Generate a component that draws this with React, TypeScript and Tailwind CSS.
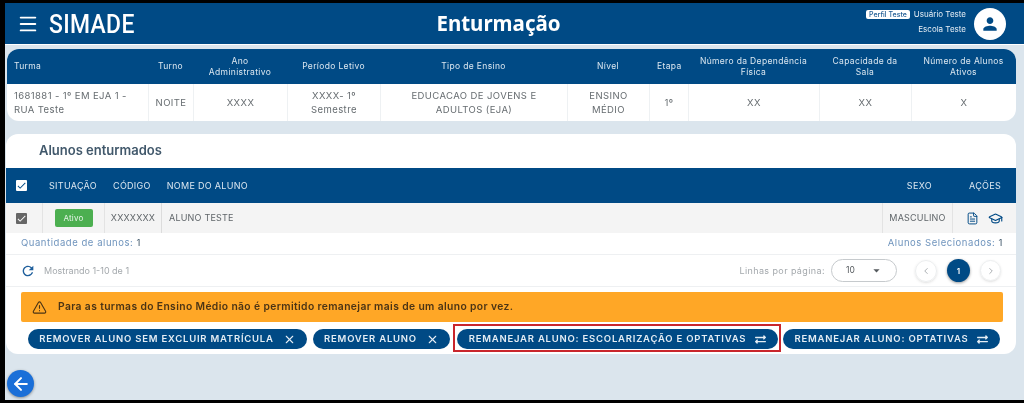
import { AlertTriangle, ArrowLeft, ChevronLeft, ChevronRight, FileText, GraduationCap, Menu, X } from "lucide-react";
import { FaExchangeAlt } from "react-icons/fa";
import { MdCheck, MdPerson, MdRefresh, MdArrowDropDown } from "react-icons/md";

const turmaCols = "grid-cols-[141px_45px_94px_93px_187px_82px_39px_131px_92px_105px]";

const headers = [
  "Turma",
  "Turno",
  "Ano Administrativo",
  "Período Letivo",
  "Tipo de Ensino",
  "Nível",
  "Etapa",
  "Número da Dependência Física",
  "Capacidade da Sala",
  "Número de Alunos Ativos",
];

const values = [
  "1681881 - 1º EM EJA 1 - RUA Teste",
  "NOITE",
  "XXXX",
  "XXXX- 1º Semestre",
  "EDUCACAO DE JOVENS E ADULTOS (EJA)",
  "ENSINO MÉDIO",
  "1º",
  "XX",
  "XX",
  "X",
];

const Check = ({ className }: { className: string }) => (
  <span className={`flex size-[11px] items-center justify-center rounded-[1px] ${className}`}>
    <MdCheck className="size-[11px]" />
  </span>
);

const ActionButton = ({ label, icon, width }: { label: string; icon: "x" | "swap"; width: string }) => (
  <button className={`flex h-5 shrink-0 items-center justify-center gap-[9px] rounded-full bg-[#004a85] text-[9.5px] font-semibold tracking-[0.78px] text-[#e4edf4] ${width}`}>
    <span>{label}</span>
    {icon === "x" ? <X className="size-[13px]" strokeWidth={2} /> : <FaExchangeAlt className="size-[11px]" />}
  </button>
);

export default function App() {
  return (
    <div className="relative flex h-[403px] w-[1024px] flex-col overflow-hidden bg-black pb-[3px] pl-[5px] pt-[3px] font-['Inter',sans-serif] blur-[0.35px]">
      <div className="flex h-full flex-col bg-[#dbe5ed]">
        <header className="grid h-[41px] shrink-0 grid-cols-[1fr_auto_1fr] items-center bg-[#004a85] pl-[12px] pr-[18px] text-white">
          <div className="flex items-center gap-[10px]">
            <Menu className="size-[22px]" strokeWidth={2} />
            <span className="origin-left scale-x-[0.88] font-['Roboto',sans-serif] text-[26px] font-medium leading-none tracking-[0.4px]">SIMADE</span>
          </div>
          <h1 className="mr-[26px] font-['Noto_Sans',sans-serif] text-[20.5px] font-bold">Enturmação</h1>
          <div className="flex items-center justify-end gap-[8px]">
            <div className="flex gap-[4px] pb-[3px]">
              <span className="mt-[3px] h-[9px] rounded-[2px] bg-white px-[3px] text-[7px] font-medium leading-[9px] text-[#1c5b93]">Perfil Teste</span>
              <div className="text-right text-[8px] leading-[15px] text-[#e6eef5]">
                <div>Usuário Teste</div>
                <div>Escola Teste</div>
              </div>
            </div>
            <span className="flex size-8 items-center justify-center rounded-full bg-white">
              <MdPerson className="size-[20px] text-[#004a85]" />
            </span>
          </div>
        </header>
        <div className="h-[1px] shrink-0 bg-white" />

        <section className="ml-[2px] mt-[4px] w-[1009px] shrink-0 overflow-hidden rounded-[12px] bg-white">
          <div className={`grid h-[35px] ${turmaCols} items-center bg-[#004a85] text-center text-[8.5px] leading-[11px] tracking-[0.35px] text-[#dbe7f0]`}>
            {headers.map((h, i) => (
              <div key={h} className={i === 0 ? "pl-[7px] text-left" : "px-2"}>
                {h}
              </div>
            ))}
          </div>
          <div className={`grid h-[37px] ${turmaCols} text-center text-[9.5px] leading-[14px] tracking-[0.4px] text-[#666c70]`}>
            {values.map((v, i) => (
              <div
                key={i}
                className={`flex items-center border-l border-l-[#eef1f3] ${i === 0 ? "border-l-0 pl-[7px] pr-3 text-left" : "justify-center px-3"}`}
              >
                {v}
              </div>
            ))}
          </div>
        </section>

        <section className="ml-[1px] mt-[13px] flex h-[220px] w-[1010px] shrink-0 flex-col overflow-hidden rounded-[12px] bg-white">
          <h2 className="flex h-[34px] shrink-0 items-center pl-[33px] text-[13px] font-semibold text-[#41586b]">Alunos enturmados</h2>

          <div className="flex h-[35px] shrink-0 items-center bg-[#004a85] text-[9px] tracking-[0.3px] text-[#dbe7f0]">
            <Check className="ml-[10px] bg-white text-[#004a85]" />
            <span className="ml-[22px]">SITUAÇÃO</span>
            <span className="ml-[16px]">CÓDIGO</span>
            <span className="ml-[16px]">NOME DO ALUNO</span>
            <span className="ml-auto">SEXO</span>
            <span className="ml-[37px] mr-[15px]">AÇÕES</span>
          </div>

          <div className="flex h-[30px] shrink-0 items-stretch bg-[#f4f4f4] text-[9px] tracking-[0.2px] text-[#5f6569]">
            <div className="flex w-[37px] items-center border-r border-r-[#e3e3e3] pl-[10px]">
              <Check className="bg-[#666666] text-white" />
            </div>
            <div className="flex w-[62px] items-center justify-center border-r border-r-[#e3e3e3]">
              <span className="flex h-[18px] w-[38px] items-center justify-center rounded-[2px] bg-[#4caf50] text-[8px] text-[#e8f5e9]">Ativo</span>
            </div>
            <div className="flex w-[57px] items-center justify-center border-r border-r-[#dcdcdc]">XXXXXXX</div>
            <div className="flex flex-1 items-center pl-[7px]">ALUNO TESTE</div>
            <div className="flex w-[71px] items-center justify-center border-x border-x-[#e3e3e3]">MASCULINO</div>
            <div className="flex w-[63px] items-center gap-[9px] pl-[13px] text-[#004a85]">
              <FileText className="size-[13px]" strokeWidth={1.8} />
              <GraduationCap className="size-[15px]" strokeWidth={1.8} />
            </div>
          </div>

          <div className="flex h-[22px] shrink-0 items-center justify-between border-b border-b-[#eef0f2] pl-[15px] pr-[13px] text-[9.5px] tracking-[0.55px] text-[#6f94bd]">
            <span>
              Quantidade de alunos: <span className="text-[#41586b]">1</span>
            </span>
            <span>
              Alunos Selecionados: <span className="text-[#41586b]">1</span>
            </span>
          </div>

          <div className="flex h-[32px] shrink-0 items-center border-b border-b-[#eef0f2] pl-[14px] pr-[15px] text-[9px] text-[#a3a8ac]">
            <MdRefresh className="size-[16px] text-[#1f5f9c]" />
            <span className="ml-[8px]">Mostrando 1-10 de 1</span>
            <span className="ml-auto mr-[6px] tracking-[0.4px]">Linhas por página:</span>
            <span className="flex h-[23px] w-[66px] items-center justify-between rounded-full border border-[#c6cacd] pl-[14px] pr-[12px] text-[8.5px] text-[#54595d]">
              10
              <MdArrowDropDown className="size-[15px]" />
            </span>
            <span className="ml-[18px] flex size-[22px] items-center justify-center rounded-full border border-[#eceeef] shadow-sm">
              <ChevronLeft className="size-[10px] text-[#9aa0a4]" />
            </span>
            <span className="ml-[10px] flex size-[23px] items-center justify-center rounded-full bg-[#004a85] text-[8px] font-semibold text-white shadow-[0_1px_3px_rgba(0,0,0,0.4)]">1</span>
            <span className="ml-[10px] flex size-[21px] items-center justify-center rounded-full border border-[#eceeef] shadow-sm">
              <ChevronRight className="size-[10px] text-[#9aa0a4]" />
            </span>
          </div>

          <div className="ml-[15px] mt-[5px] flex h-[30px] w-[982px] shrink-0 items-center gap-[11px] rounded-[2px] bg-[#ffa726] pl-[11px] text-[10.3px] font-semibold tracking-[0.38px] text-[#4b3415]">
            <AlertTriangle className="size-[15px]" strokeWidth={1.8} />
            <span>Para as turmas do Ensino Médio não é permitido remanejar mais de um aluno por vez.</span>
          </div>

          <div className="ml-[22px] mt-[7px] flex items-center">
            <ActionButton label="REMOVER ALUNO SEM EXCLUIR MATRÍCULA" icon="x" width="w-[279px]" />
            <div className="ml-[6px]">
              <ActionButton label="REMOVER ALUNO" icon="x" width="w-[137px]" />
            </div>
            <div className="relative ml-[7px]">
              <ActionButton label="REMANEJAR ALUNO: ESCOLARIZAÇÃO E OPTATIVAS" icon="swap" width="w-[321px]" />
              <span className="absolute -bottom-[3px] -left-[4px] -right-[3px] -top-[5px] border-2 border-[#c9262c]" />
            </div>
            <div className="ml-[5px]">
              <ActionButton label="REMANEJAR ALUNO: OPTATIVAS" icon="swap" width="w-[217px]" />
            </div>
          </div>
        </section>
      </div>

      <button className="absolute left-[7px] top-[370px] flex size-[27px] items-center justify-center rounded-full bg-[#1a6fd8] text-white shadow-[0_1px_3px_rgba(0,0,0,0.4)]">
        <ArrowLeft className="size-[20px]" strokeWidth={2.4} />
      </button>
    </div>
  );
}
